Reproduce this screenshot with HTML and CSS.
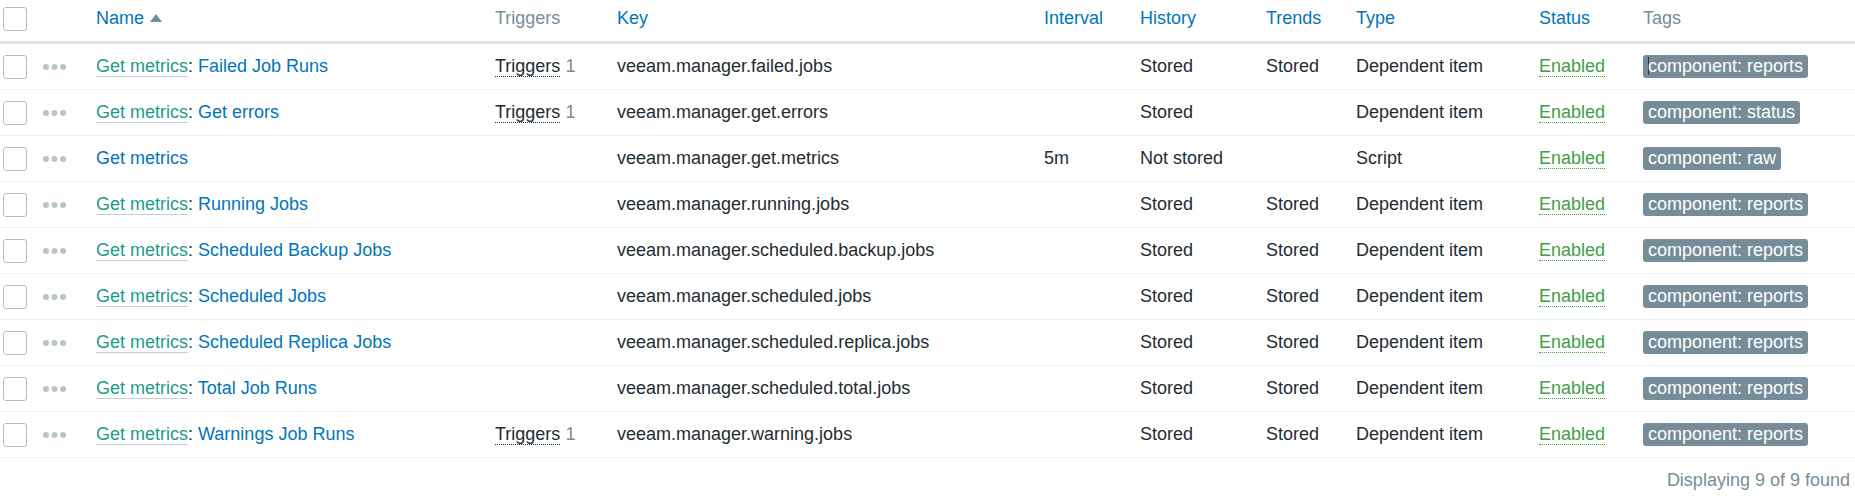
FILE: index.html
```html
<!DOCTYPE html>
<html>
<head>
<meta charset="utf-8">
<link rel="stylesheet" href="styles.css">
</head>
<body>
<table class="list">
<colgroup>
<col class="c-check"><col class="c-dots"><col class="c-name"><col class="c-trig"><col class="c-key"><col class="c-int"><col class="c-hist"><col class="c-trend"><col class="c-type"><col class="c-status"><col class="c-tags">
</colgroup>
<thead>
<tr>
<th><span class="checkbox"></span></th>
<th></th>
<th><a class="sort">Name</a><span class="arrow"></span></th>
<th class="plain">Triggers</th>
<th><a class="sort">Key</a></th>
<th><a class="sort">Interval</a></th>
<th><a class="sort">History</a></th>
<th><a class="sort">Trends</a></th>
<th><a class="sort">Type</a></th>
<th><a class="sort">Status</a></th>
<th class="plain">Tags</th>
</tr>
</thead>
<tbody>
<tr>
<td><span class="checkbox"></span></td>
<td><svg class="dots" width="24" height="8" viewBox="0 0 24 8"><circle cx="3" cy="4" r="3"/><circle cx="11.5" cy="4" r="3"/><circle cx="20" cy="4" r="3"/></svg></td>
<td><a class="master">Get metrics</a>: <a class="item">Failed Job Runs</a></td>
<td><span class="trig">Triggers</span> <span class="count">1</span></td>
<td>veeam.manager.failed.jobs</td>
<td></td>
<td>Stored</td>
<td>Stored</td>
<td>Dependent item</td>
<td><span class="enabled">Enabled</span></td>
<td><span class="tag"><span class="caret"></span>component: reports</span></td>
</tr>
<tr>
<td><span class="checkbox"></span></td>
<td><svg class="dots" width="24" height="8" viewBox="0 0 24 8"><circle cx="3" cy="4" r="3"/><circle cx="11.5" cy="4" r="3"/><circle cx="20" cy="4" r="3"/></svg></td>
<td><a class="master">Get metrics</a>: <a class="item">Get errors</a></td>
<td><span class="trig">Triggers</span> <span class="count">1</span></td>
<td>veeam.manager.get.errors</td>
<td></td>
<td>Stored</td>
<td></td>
<td>Dependent item</td>
<td><span class="enabled">Enabled</span></td>
<td><span class="tag">component: status</span></td>
</tr>
<tr>
<td><span class="checkbox"></span></td>
<td><svg class="dots" width="24" height="8" viewBox="0 0 24 8"><circle cx="3" cy="4" r="3"/><circle cx="11.5" cy="4" r="3"/><circle cx="20" cy="4" r="3"/></svg></td>
<td><a class="item">Get metrics</a></td>
<td></td>
<td>veeam.manager.get.metrics</td>
<td>5m</td>
<td>Not stored</td>
<td></td>
<td>Script</td>
<td><span class="enabled">Enabled</span></td>
<td><span class="tag">component: raw</span></td>
</tr>
<tr>
<td><span class="checkbox"></span></td>
<td><svg class="dots" width="24" height="8" viewBox="0 0 24 8"><circle cx="3" cy="4" r="3"/><circle cx="11.5" cy="4" r="3"/><circle cx="20" cy="4" r="3"/></svg></td>
<td><a class="master">Get metrics</a>: <a class="item">Running Jobs</a></td>
<td></td>
<td>veeam.manager.running.jobs</td>
<td></td>
<td>Stored</td>
<td>Stored</td>
<td>Dependent item</td>
<td><span class="enabled">Enabled</span></td>
<td><span class="tag">component: reports</span></td>
</tr>
<tr>
<td><span class="checkbox"></span></td>
<td><svg class="dots" width="24" height="8" viewBox="0 0 24 8"><circle cx="3" cy="4" r="3"/><circle cx="11.5" cy="4" r="3"/><circle cx="20" cy="4" r="3"/></svg></td>
<td><a class="master">Get metrics</a>: <a class="item">Scheduled Backup Jobs</a></td>
<td></td>
<td>veeam.manager.scheduled.backup.jobs</td>
<td></td>
<td>Stored</td>
<td>Stored</td>
<td>Dependent item</td>
<td><span class="enabled">Enabled</span></td>
<td><span class="tag">component: reports</span></td>
</tr>
<tr>
<td><span class="checkbox"></span></td>
<td><svg class="dots" width="24" height="8" viewBox="0 0 24 8"><circle cx="3" cy="4" r="3"/><circle cx="11.5" cy="4" r="3"/><circle cx="20" cy="4" r="3"/></svg></td>
<td><a class="master">Get metrics</a>: <a class="item">Scheduled Jobs</a></td>
<td></td>
<td>veeam.manager.scheduled.jobs</td>
<td></td>
<td>Stored</td>
<td>Stored</td>
<td>Dependent item</td>
<td><span class="enabled">Enabled</span></td>
<td><span class="tag">component: reports</span></td>
</tr>
<tr>
<td><span class="checkbox"></span></td>
<td><svg class="dots" width="24" height="8" viewBox="0 0 24 8"><circle cx="3" cy="4" r="3"/><circle cx="11.5" cy="4" r="3"/><circle cx="20" cy="4" r="3"/></svg></td>
<td><a class="master">Get metrics</a>: <a class="item">Scheduled Replica Jobs</a></td>
<td></td>
<td>veeam.manager.scheduled.replica.jobs</td>
<td></td>
<td>Stored</td>
<td>Stored</td>
<td>Dependent item</td>
<td><span class="enabled">Enabled</span></td>
<td><span class="tag">component: reports</span></td>
</tr>
<tr>
<td><span class="checkbox"></span></td>
<td><svg class="dots" width="24" height="8" viewBox="0 0 24 8"><circle cx="3" cy="4" r="3"/><circle cx="11.5" cy="4" r="3"/><circle cx="20" cy="4" r="3"/></svg></td>
<td><a class="master">Get metrics</a>: <a class="item">Total Job Runs</a></td>
<td></td>
<td>veeam.manager.scheduled.total.jobs</td>
<td></td>
<td>Stored</td>
<td>Stored</td>
<td>Dependent item</td>
<td><span class="enabled">Enabled</span></td>
<td><span class="tag">component: reports</span></td>
</tr>
<tr>
<td><span class="checkbox"></span></td>
<td><svg class="dots" width="24" height="8" viewBox="0 0 24 8"><circle cx="3" cy="4" r="3"/><circle cx="11.5" cy="4" r="3"/><circle cx="20" cy="4" r="3"/></svg></td>
<td><a class="master">Get metrics</a>: <a class="item">Warnings Job Runs</a></td>
<td><span class="trig">Triggers</span> <span class="count">1</span></td>
<td>veeam.manager.warning.jobs</td>
<td></td>
<td>Stored</td>
<td>Stored</td>
<td>Dependent item</td>
<td><span class="enabled">Enabled</span></td>
<td><span class="tag">component: reports</span></td>
</tr>
</tbody>
</table>
<div class="footer">Displaying 9 of 9 found</div>
</body>
</html>
```

FILE: styles.css
```css
html, body {
  margin: 0;
  padding: 0;
  background: #ffffff;
}
body {
  font-family: "Liberation Sans", Arial, sans-serif;
  font-size: 18px;
  color: #1f2c33;
}
.list {
  width: 1855px;
  table-layout: fixed;
  border-collapse: collapse;
  border-spacing: 0;
}
.c-check { width: 40px; }
.c-dots { width: 53px; }
.c-name { width: 399px; }
.c-trig { width: 122px; }
.c-key { width: 427px; }
.c-int { width: 96px; }
.c-hist { width: 126px; }
.c-trend { width: 90px; }
.c-type { width: 183px; }
.c-status { width: 104px; }
.c-tags { width: 215px; }

.list th {
  height: 37px;
  padding: 0 0 4px 3px;
  text-align: left;
  font-weight: normal;
  vertical-align: middle;
  white-space: nowrap;
  border-bottom: 3px solid #dde3e6;
}
.list th.plain {
  color: #768d99;
}
.list td {
  height: 45px;
  padding: 0 0 0 3px;
  vertical-align: middle;
  white-space: nowrap;
  border-bottom: 1px solid #ebeef0;
}
.sort {
  color: #0275b8;
  text-decoration: none;
}
.arrow {
  display: inline-block;
  width: 0;
  height: 0;
  margin-left: 6px;
  border-left: 6px solid transparent;
  border-right: 6px solid transparent;
  border-bottom: 8px solid #768d99;
  vertical-align: 2px;
}
.checkbox {
  display: block;
  box-sizing: border-box;
  width: 24px;
  height: 24px;
  border: 1.5px solid #b0bec5;
  border-radius: 3px;
  background: #ffffff;
}
.dots {
  display: block;
  fill: #b9c4ca;
}
.master {
  color: #1c9c86;
  text-decoration: none;
  border-bottom: 1px solid #c3ced4;
}
.item {
  color: #0275b8;
  text-decoration: none;
}
.trig {
  color: #1f2c33;
  border-bottom: 1px dotted #1f2c33;
}
.count {
  color: #768d99;
}
.enabled {
  color: #429e47;
  border-bottom: 1px dotted #429e47;
}
.tag {
  display: inline-block;
  box-sizing: border-box;
  height: 23px;
  line-height: 23px;
  padding: 0 5px;
  border-radius: 3px;
  background: #768d99;
  color: #ffffff;
  vertical-align: middle;
}
.caret {
  display: inline-block;
  width: 1px;
  height: 18px;
  margin-right: -1px;
  background: #2b3a42;
  vertical-align: -3px;
}
.footer {
  height: 44px;
  line-height: 44px;
  text-align: right;
  padding-right: 5px;
  color: #768d99;
}
```
